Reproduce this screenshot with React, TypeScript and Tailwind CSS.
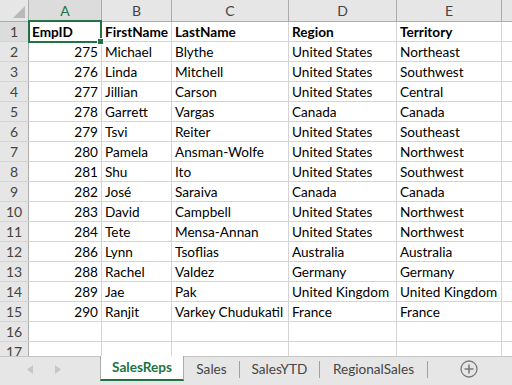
const columns = [
  { key: "A", width: "w-[73px]" },
  { key: "B", width: "w-[70px]" },
  { key: "C", width: "w-[117px]" },
  { key: "D", width: "w-[108px]" },
  { key: "E", width: "w-[105px]" },
];

const rows: [string, string, string, string, string][] = [
  ["EmpID", "FirstName", "LastName", "Region", "Territory"],
  ["275", "Michael", "Blythe", "United States", "Northeast"],
  ["276", "Linda", "Mitchell", "United States", "Southwest"],
  ["277", "Jillian", "Carson", "United States", "Central"],
  ["278", "Garrett", "Vargas", "Canada", "Canada"],
  ["279", "Tsvi", "Reiter", "United States", "Southeast"],
  ["280", "Pamela", "Ansman-Wolfe", "United States", "Northwest"],
  ["281", "Shu", "Ito", "United States", "Southwest"],
  ["282", "José", "Saraiva", "Canada", "Canada"],
  ["283", "David", "Campbell", "United States", "Northwest"],
  ["284", "Tete", "Mensa-Annan", "United States", "Northwest"],
  ["286", "Lynn", "Tsoflias", "Australia", "Australia"],
  ["288", "Rachel", "Valdez", "Germany", "Germany"],
  ["289", "Jae", "Pak", "United Kingdom", "United Kingdom"],
  ["290", "Ranjit", "Varkey Chudukatil", "France", "France"],
  ["", "", "", "", ""],
  ["", "", "", "", ""],
];

const tabs = [
  { name: "SalesReps", width: "w-[84px]" },
  { name: "Sales", width: "w-[56px]" },
  { name: "SalesYTD", width: "w-[80px]" },
  { name: "RegionalSales", width: "w-[108px]" },
];

function ColumnHeaders() {
  return (
    <div className="flex h-[22px] shrink-0 border-b border-[#ababab] bg-[#e6e6e6] text-[14px] text-[#444]">
      <div className="relative w-[29px] shrink-0 border-r border-[#ababab]">
        <svg className="absolute right-[3px] bottom-[3px]" width="12" height="12" viewBox="0 0 12 12">
          <polygon points="12,0 12,12 0,12" fill="#b9b9b9" />
        </svg>
      </div>
      {columns.map((c, i) => (
        <div
          key={c.key}
          className={`${c.width} shrink-0 flex items-center justify-center border-r border-[#ababab] ${
            i === 0 ? "bg-[#dcdcdc] text-[#217346]" : ""
          }`}
        >
          {c.key}
        </div>
      ))}
      <div className="flex-1" />
    </div>
  );
}

function DataRow({ n, cells }: { n: number; cells: string[] }) {
  const header = n === 1;
  return (
    <div className="flex h-[20px] shrink-0 border-b border-[#d4d4d4]">
      <div
        className={`w-[29px] shrink-0 flex items-center justify-center border-r border-[#ababab] text-[14px] text-[#444] ${
          header ? "bg-[#dcdcdc]" : "bg-[#e6e6e6]"
        }`}
      >
        {n}
      </div>
      {columns.map((c, i) => (
        <div
          key={c.key}
          className={`${c.width} shrink-0 flex items-center border-r border-[#d4d4d4] px-[3px] pt-px whitespace-nowrap ${
            i === 0 && !header ? "justify-end" : ""
          } ${header ? "font-bold" : ""}`}
        >
          {cells[i]}
        </div>
      ))}
      <div className="w-[11px] shrink-0 border-r border-[#d4d4d4]" />
    </div>
  );
}

function TabBar() {
  return (
    <div className="flex h-[29px] shrink-0 border-t border-[#c6c6c6] bg-[#e6e6e6] text-[#444]">
      <div className="flex w-[100px] shrink-0 items-center pl-[27px] pb-[4px] gap-[22px]">
        <svg width="6" height="9" viewBox="0 0 6 9">
          <polygon points="6,0 6,9 0,4.5" fill="#c6c6c6" />
        </svg>
        <svg width="6" height="9" viewBox="0 0 6 9">
          <polygon points="0,0 0,9 6,4.5" fill="#c6c6c6" />
        </svg>
      </div>
      {tabs.map((t, i) =>
        i === 0 ? (
          <div
            key={t.name}
            className={`-mt-px flex h-[25px] ${t.width} shrink-0 items-center justify-center border-x border-[#ababab] border-b-2 border-b-[#217346] bg-white font-bold text-[#217346]`}
          >
            {t.name}
          </div>
        ) : (
          <div key={t.name} className={`flex h-[24px] ${t.width} shrink-0 items-center`}>
            <span className="flex-1 text-center">{t.name}</span>
            <div className="h-[17px] w-px bg-[#a0a0a0]" />
          </div>
        )
      )}
      <div className="flex flex-1 items-center justify-center pb-[4px] pr-[2px]">
        <svg width="18" height="18" viewBox="0 0 18 18">
          <circle cx="9" cy="9" r="8" fill="none" stroke="#7a7a7a" strokeWidth="1.3" />
          <path d="M9 4.5v9M4.5 9h9" stroke="#7a7a7a" strokeWidth="1.6" />
        </svg>
      </div>
    </div>
  );
}

export default function App() {
  return (
    <div
      className="flex h-[385px] w-[512px] flex-col overflow-hidden bg-white text-[13.6px] text-black"
      style={{ fontFamily: "Lato, 'Liberation Sans', sans-serif" }}
    >
      <div className="relative flex min-h-0 flex-1 flex-col overflow-hidden">
        <ColumnHeaders />
        {rows.map((r, i) => (
          <DataRow key={i} n={i + 1} cells={r} />
        ))}
        <div className="pointer-events-none absolute left-[28px] top-[20px] h-[23px] w-[74px] border-2 border-[#217346]" />
        <div className="pointer-events-none absolute left-[97px] top-[38px] h-[7px] w-[7px] border border-white bg-[#217346]" />
      </div>
      <TabBar />
    </div>
  );
}
